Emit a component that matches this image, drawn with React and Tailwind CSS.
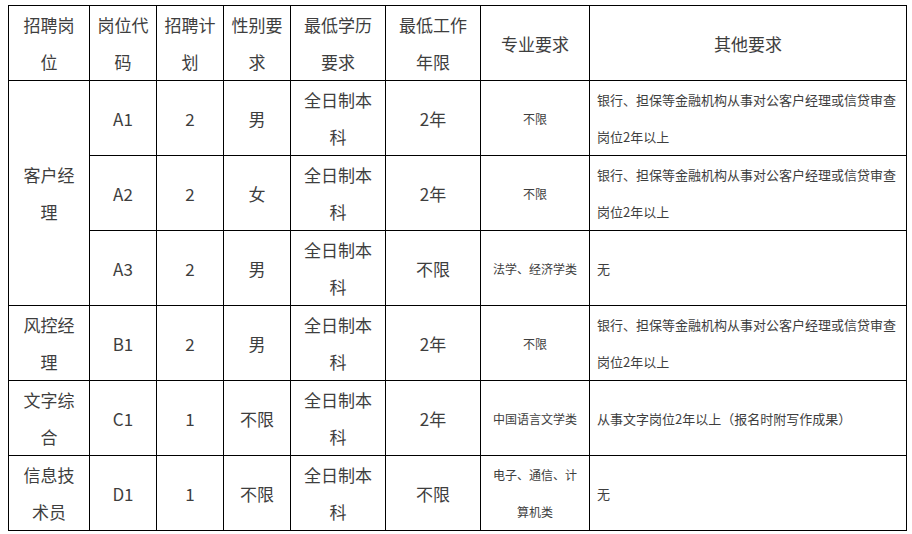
import React from "react";

const rows = [
  { code: "A1", plan: "2", sex: "男", edu: "全日制本科", yrs: "2年", major: "不限", other: "银行、担保等金融机构从事对公客户经理或信贷审查岗位2年以上" },
  { code: "A2", plan: "2", sex: "女", edu: "全日制本科", yrs: "2年", major: "不限", other: "银行、担保等金融机构从事对公客户经理或信贷审查岗位2年以上" },
  { code: "A3", plan: "2", sex: "男", edu: "全日制本科", yrs: "不限", major: "法学、经济学类", other: "无" },
];

const cell = "border border-black px-[7px] text-center align-middle";
const big = "text-[17px]";
const small = "text-[12px]";
const otherCls = "border border-black pl-[7px] pr-[6px] text-left align-middle text-[13px]";

function Row({ pos, span, r }) {
  return (
    <tr className="h-[75px]">
      {pos && (
        <td rowSpan={span} className={`${cell} ${big}`}>{pos}</td>
      )}
      <td className={`${cell} ${big}`}>{r.code}</td>
      <td className={`${cell} ${big}`}>{r.plan}</td>
      <td className={`${cell} ${big}`}>{r.sex}</td>
      <td className={`${cell} ${big}`}>{r.edu}</td>
      <td className={`${cell} ${big}`}>{r.yrs}</td>
      <td className={`${cell} ${small}`}>{r.major}</td>
      <td className={otherCls}>{r.other}</td>
    </tr>
  );
}

export default function App() {
  return (
    <div className="w-[912px] h-[534px] bg-white pl-[8px] pt-[5px]" style={{ fontFamily: '"Noto Sans CJK SC", "Noto Sans", sans-serif' }}>
      <table className="table-fixed border-collapse border border-black w-[898px] text-[#3e3e3e] leading-[37px]">
        <colgroup>
          <col className="w-[81px]" />
          <col className="w-[67px]" />
          <col className="w-[67px]" />
          <col className="w-[67px]" />
          <col className="w-[95px]" />
          <col className="w-[95px]" />
          <col className="w-[109px]" />
          <col className="w-[317px]" />
        </colgroup>
        <tbody>
          <tr className="h-[75px]">
            <td className={`${cell} ${big}`}>招聘岗位</td>
            <td className={`${cell} ${big}`}>岗位代码</td>
            <td className={`${cell} ${big}`}>招聘计划</td>
            <td className={`${cell} ${big}`}>性别要求</td>
            <td className={`${cell} ${big}`}>最低学历要求</td>
            <td className={`${cell} ${big}`}>最低工作年限</td>
            <td className={`${cell} ${big}`}>专业要求</td>
            <td className={`${cell} ${big}`}>其他要求</td>
          </tr>
          <Row pos="客户经理" span={3} r={rows[0]} />
          <Row r={rows[1]} />
          <Row r={rows[2]} />
          <Row pos="风控经理" span={1} r={{ code: "B1", plan: "2", sex: "男", edu: "全日制本科", yrs: "2年", major: "不限", other: "银行、担保等金融机构从事对公客户经理或信贷审查岗位2年以上" }} />
          <Row pos="文字综合" span={1} r={{ code: "C1", plan: "1", sex: "不限", edu: "全日制本科", yrs: "2年", major: "中国语言文学类", other: "从事文字岗位2年以上（报名时附写作成果）" }} />
          <Row pos="信息技术员" span={1} r={{ code: "D1", plan: "1", sex: "不限", edu: "全日制本科", yrs: "不限", major: "电子、通信、计算机类", other: "无" }} />
        </tbody>
      </table>
    </div>
  );
}
